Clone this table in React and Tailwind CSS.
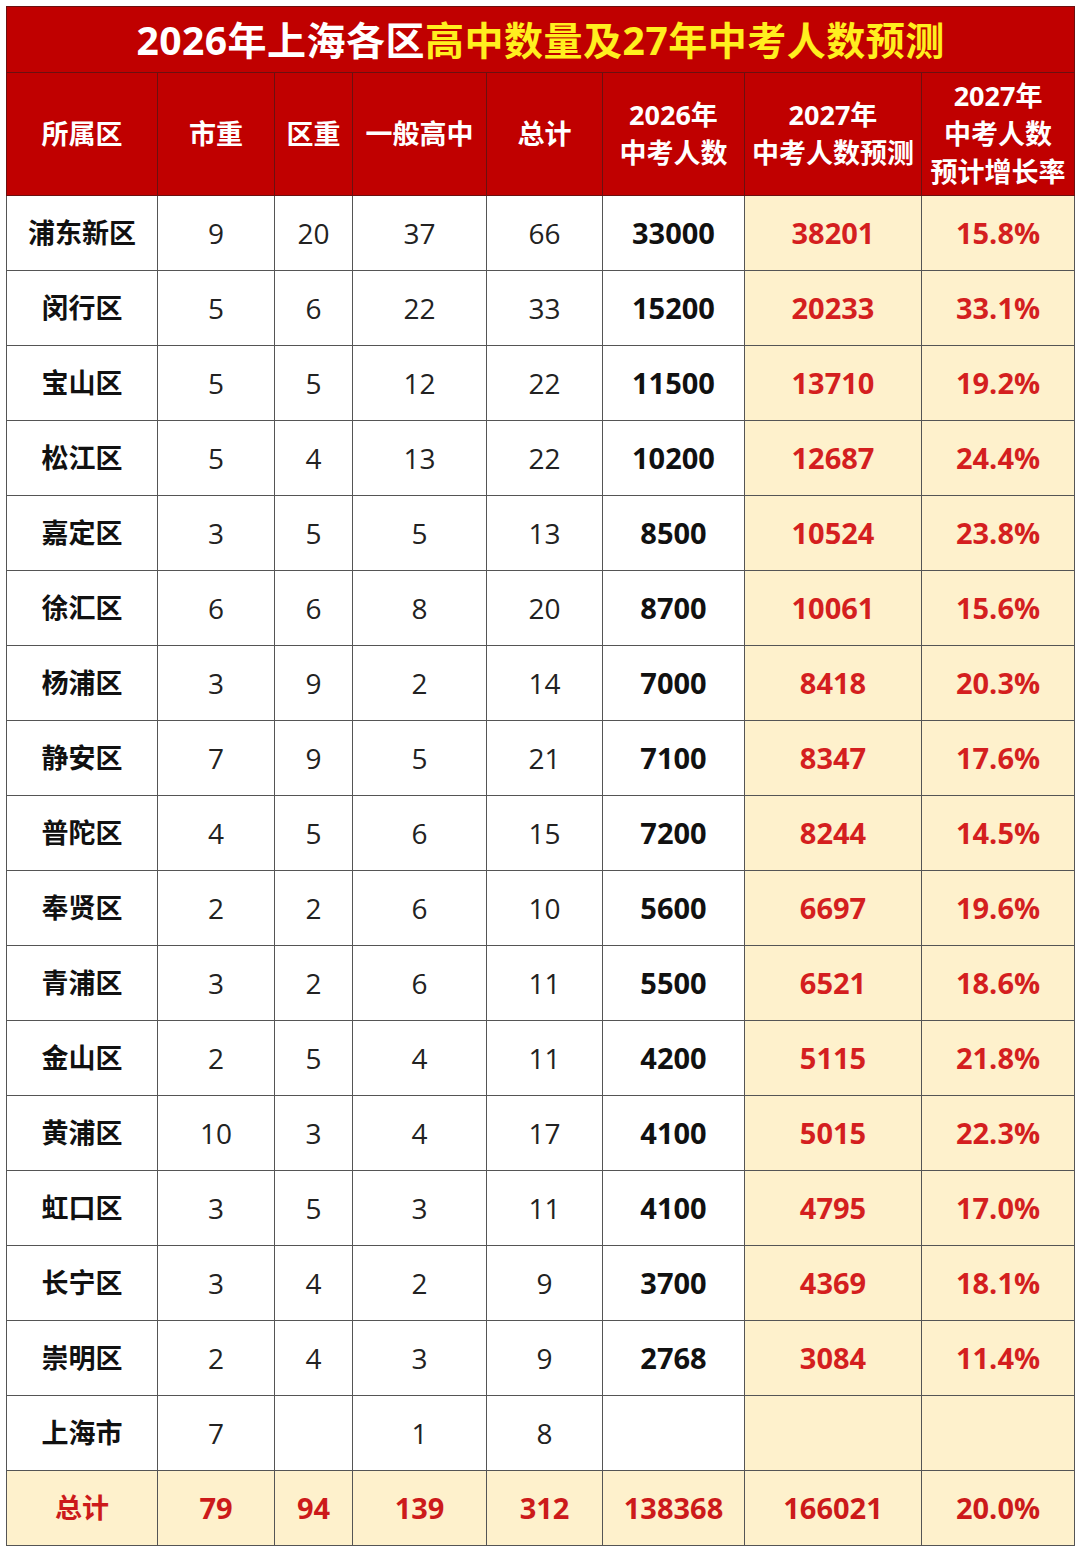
import React from 'react';

const rows = [
  ['浦东新区', 9, 20, 37, 66, 33000, 38201, '15.8%'],
  ['闵行区', 5, 6, 22, 33, 15200, 20233, '33.1%'],
  ['宝山区', 5, 5, 12, 22, 11500, 13710, '19.2%'],
  ['松江区', 5, 4, 13, 22, 10200, 12687, '24.4%'],
  ['嘉定区', 3, 5, 5, 13, 8500, 10524, '23.8%'],
  ['徐汇区', 6, 6, 8, 20, 8700, 10061, '15.6%'],
  ['杨浦区', 3, 9, 2, 14, 7000, 8418, '20.3%'],
  ['静安区', 7, 9, 5, 21, 7100, 8347, '17.6%'],
  ['普陀区', 4, 5, 6, 15, 7200, 8244, '14.5%'],
  ['奉贤区', 2, 2, 6, 10, 5600, 6697, '19.6%'],
  ['青浦区', 3, 2, 6, 11, 5500, 6521, '18.6%'],
  ['金山区', 2, 5, 4, 11, 4200, 5115, '21.8%'],
  ['黄浦区', 10, 3, 4, 17, 4100, 5015, '22.3%'],
  ['虹口区', 3, 5, 3, 11, 4100, 4795, '17.0%'],
  ['长宁区', 3, 4, 2, 9, 3700, 4369, '18.1%'],
  ['崇明区', 2, 4, 3, 9, 2768, 3084, '11.4%'],
  ['上海市', 7, '', 1, 8, '', '', ''],
];

const widths = [151, 117, 78, 134, 116, 142, 177, 153];
const font = { fontFamily: '"Open Sans", "Noto Sans CJK SC", sans-serif' };

export default function App() {
  return (
    <div className="bg-white w-[1080px] h-[1550px] p-[6px]" style={font}>
      <table className="table-fixed border-collapse w-[1068px]">
        <colgroup>
          {widths.map((w, i) => <col key={i} style={{ width: w }} />)}
        </colgroup>
        <thead>
          <tr className="h-[66px]">
            <th colSpan={8} className="bg-[#c00000] border border-[#6b1010] text-[39px] font-bold tracking-[0.5px] leading-none">
              <span className="text-white">2026年上海各区</span>
              <span className="text-[#ffef1f]">高中数量及27年中考人数预测</span>
            </th>
          </tr>
          <tr className="h-[123px] bg-[#c00000] text-white text-[27px] font-bold leading-[38px]">
            <th className="border border-[#6b1010]">所属区</th>
            <th className="border border-[#6b1010]">市重</th>
            <th className="border border-[#6b1010]">区重</th>
            <th className="border border-[#6b1010] whitespace-nowrap">一般高中</th>
            <th className="border border-[#6b1010]">总计</th>
            <th className="border border-[#6b1010]">2026年<br />中考人数</th>
            <th className="border border-[#6b1010] whitespace-nowrap">2027年<br />中考人数预测</th>
            <th className="border border-[#6b1010] whitespace-nowrap">2027年<br />中考人数<br />预计增长率</th>
          </tr>
        </thead>
        <tbody>
          {rows.map((r) => (
            <tr key={r[0]} className="h-[75px] text-center">
              <td className="border border-[#555] bg-white text-[27px] font-bold text-[#111]">{r[0]}</td>
              <td className="border border-[#555] bg-white text-[28px] text-[#222]">{r[1]}</td>
              <td className="border border-[#555] bg-white text-[28px] text-[#222]">{r[2]}</td>
              <td className="border border-[#555] bg-white text-[28px] text-[#222]">{r[3]}</td>
              <td className="border border-[#555] bg-white text-[28px] text-[#222]">{r[4]}</td>
              <td className="border border-[#555] bg-white text-[29px] font-bold text-[#111]">{r[5]}</td>
              <td className="border border-[#555] bg-[#fef1cc] text-[29px] font-bold text-[#d41f1f]">{r[6]}</td>
              <td className="border border-[#555] bg-[#fef1cc] text-[29px] font-bold text-[#d41f1f]">{r[7]}</td>
            </tr>
          ))}
          <tr className="h-[75px] text-center bg-[#fef1cc] text-[#cc1a1a] font-bold text-[29px]">
            <td className="border border-[#555] text-[27px]">总计</td>
            <td className="border border-[#555]">79</td>
            <td className="border border-[#555]">94</td>
            <td className="border border-[#555]">139</td>
            <td className="border border-[#555]">312</td>
            <td className="border border-[#555]">138368</td>
            <td className="border border-[#555]">166021</td>
            <td className="border border-[#555]">20.0%</td>
          </tr>
        </tbody>
      </table>
    </div>
  );
}
